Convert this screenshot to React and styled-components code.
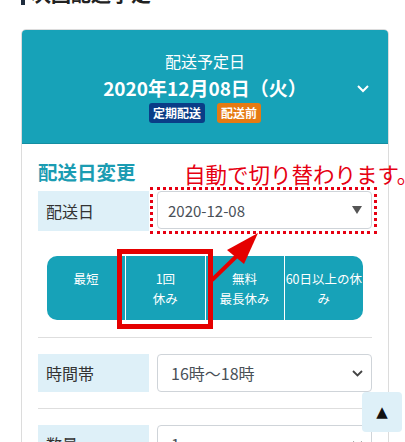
import React from "react";
import styled, { createGlobalStyle } from "styled-components";

const Global = createGlobalStyle`
  html, body { margin: 0; padding: 0; background: #fff; overflow: hidden; }
  body { font-family: "Noto Sans CJK JP", "Noto Sans", sans-serif; color: #333; }
`;

const TEAL = "#17a2b8";
const LABEL_BG = "#def0f8";
const RED = "#e60012";

const Page = styled.div`
  position: relative;
  width: 405px;
  height: 442px;
  overflow: hidden;
  padding: 0 16px 0 21px;
  box-sizing: border-box;
`;

const PageTitle = styled.h2`
  margin: -17px 0 0;
  height: 22px;
  line-height: 22px;
  font-size: 20px;
  font-weight: 700;
  color: #222;
  border-left: 4px solid #1f2d3d;
  padding-left: 6px;
`;

const Card = styled.section`
  margin-top: 24px;
  border: 1px solid #dcdcdc;
  border-radius: 5px 5px 0 0;
  height: 460px;
`;

const CardHeader = styled.header`
  display: grid;
  grid-template-columns: 48px 1fr 48px;
  align-items: center;
  background: ${TEAL};
  color: #fff;
  height: 114px;
  border-radius: 4px 4px 0 0;
  border-bottom: 1px solid rgba(0, 0, 0, 0.12);
  box-sizing: border-box;
`;

const HeaderCenter = styled.div`
  grid-column: 2;
  display: flex;
  flex-direction: column;
  align-items: center;
`;

const HeaderTitle = styled.div`
  font-size: 16px;
  line-height: 22px;
  margin-bottom: 3px;
`;

const HeaderDate = styled.div`
  font-size: 19px;
  line-height: 26px;
  font-weight: 700;
  white-space: nowrap;
`;

const Badges = styled.div`
  display: flex;
  gap: 12px;
  margin-top: 2px;
`;

const Badge = styled.span`
  display: inline-block;
  background: ${(p) => p.$bg};
  color: #fff;
  font-size: 12px;
  font-weight: 700;
  line-height: 20px;
  height: 20px;
  padding: 0 4px;
  border-radius: 3px;
`;

const Toggle = styled.div`
  grid-column: 3;
  justify-self: end;
  margin-right: 19px;
  display: flex;
  margin-top: 4px;
`;

const CardBody = styled.div`
  padding: 15px 16px 0;
`;

const SectionTitle = styled.h3`
  margin: 0;
  font-size: 19.5px;
  line-height: 26px;
  font-weight: 700;
  color: #1b9cb2;
`;

const FieldRow = styled.div`
  display: flex;
  align-items: flex-start;
  gap: 8px;
  margin-top: ${(p) => p.$mt || 0}px;
`;

const FieldLabel = styled.div`
  flex: 0 0 111px;
  height: ${(p) => p.$h}px;
  background: ${LABEL_BG};
  display: flex;
  align-items: center;
  padding-left: 8px;
  box-sizing: border-box;
  font-size: 16px;
  color: #333;
`;

const SelectBox = styled.div`
  flex: 1;
  height: ${(p) => p.$h}px;
  border: 1px solid #cfd4d9;
  border-radius: 4px;
  box-sizing: border-box;
  display: flex;
  align-items: center;
  justify-content: space-between;
  padding: 0 8px 0 ${(p) => p.$pl}px;
  font-size: ${(p) => p.$fs}px;
  color: #495057;
  background: #fff;
`;

const Segments = styled.div`
  display: flex;
  margin: 25px 9px 0;
  height: 64px;
  border-radius: 10px;
  overflow: hidden;
  background: ${TEAL};
`;

const Segment = styled.div`
  flex: 1;
  color: #fff;
  font-size: 12.5px;
  line-height: 20px;
  text-align: center;
  padding-top: 13px;
  box-sizing: border-box;
  & + & {
    border-left: 1px solid #fff;
  }
`;

const Divider = styled.hr`
  border: 0;
  border-top: 1px solid #dedede;
  margin: ${(p) => p.$mt}px 0 16px;
`;

const Note = styled.div`
  position: absolute;
  left: 184px;
  top: 161px;
  font-size: 21.5px;
  line-height: 26px;
  color: ${RED};
  white-space: nowrap;
`;

const DottedFrame = styled.div`
  position: absolute;
  left: 150px;
  top: 187px;
  width: 227px;
  height: 47px;
  box-sizing: border-box;
  border: 3px dotted ${RED};
`;

const HighlightFrame = styled.div`
  position: absolute;
  left: 117px;
  top: 249px;
  width: 96px;
  height: 80px;
  box-sizing: border-box;
  border: 5px solid #e50000;
`;

const ArrowSvg = styled.svg`
  position: absolute;
  left: 200px;
  top: 225px;
`;

const ToTop = styled.button`
  position: absolute;
  right: 3px;
  bottom: 10px;
  width: 40px;
  height: 40px;
  border: 0;
  border-radius: 4px;
  background: ${LABEL_BG};
  color: #111;
  font-size: 15px;
  display: flex;
  align-items: center;
  justify-content: center;
  padding: 0;
  font-family: "DejaVu Sans", sans-serif;
`;

const Caret = () => (
  <svg width="12" height="8" viewBox="0 0 12 8">
    <path d="M1 1 L6 6 L11 1" fill="none" stroke="#fff" strokeWidth="2" />
  </svg>
);

const Triangle = () => (
  <svg width="10" height="8" viewBox="0 0 10 8" style={{ marginRight: 1 }}>
    <path d="M0 0 H10 L5 8 Z" fill="#555" />
  </svg>
);

const SmallChevron = () => (
  <svg width="11" height="7" viewBox="0 0 11 7">
    <path d="M1 1 L5.5 5.5 L10 1" fill="none" stroke="#444" strokeWidth="1.8" />
  </svg>
);

export default function App() {
  return (
    <>
      <Global />
      <Page>
        <PageTitle>次回配送予定</PageTitle>
        <Card>
          <CardHeader>
            <HeaderCenter>
              <HeaderTitle>配送予定日</HeaderTitle>
              <HeaderDate>2020年12月08日（火）</HeaderDate>
              <Badges>
                <Badge $bg="#0a3d87">定期配送</Badge>
                <Badge $bg="#e67a12">配送前</Badge>
              </Badges>
            </HeaderCenter>
            <Toggle>
              <Caret />
            </Toggle>
          </CardHeader>
          <CardBody>
            <SectionTitle>配送日変更</SectionTitle>
            <FieldRow $mt={6}>
              <FieldLabel $h={40}>配送日</FieldLabel>
              <SelectBox $h={38} $pl={10} $fs={15}>
                <span>2020-12-08</span>
                <Triangle />
              </SelectBox>
            </FieldRow>
            <Segments>
              <Segment>最短</Segment>
              <Segment>1回<br />休み</Segment>
              <Segment>無料<br />最長休み</Segment>
              <Segment>60日以上の休み</Segment>
            </Segments>
            <Divider $mt={17} />
            <FieldRow>
              <FieldLabel $h={38}>時間帯</FieldLabel>
              <SelectBox $h={38} $pl={13} $fs={16}>
                <span>16時〜18時</span>
                <SmallChevron />
              </SelectBox>
            </FieldRow>
            <Divider $mt={16} />
            <FieldRow>
              <FieldLabel $h={38}>数量</FieldLabel>
              <SelectBox $h={38} $pl={13} $fs={16}>
                <span>1</span>
                <SmallChevron />
              </SelectBox>
            </FieldRow>
          </CardBody>
        </Card>

        <Note>自動で切り替わります。</Note>
        <DottedFrame />
        <HighlightFrame />
        <ArrowSvg width="64" height="64" viewBox="0 0 64 64">
          <line x1="12" y1="55" x2="44" y2="24" stroke="#e50000" strokeWidth="4" />
          <polygon points="58,8 27,25 44,39" fill="#e50000" />
        </ArrowSvg>
        <ToTop aria-label="ページトップへ">▲</ToTop>
      </Page>
    </>
  );
}
